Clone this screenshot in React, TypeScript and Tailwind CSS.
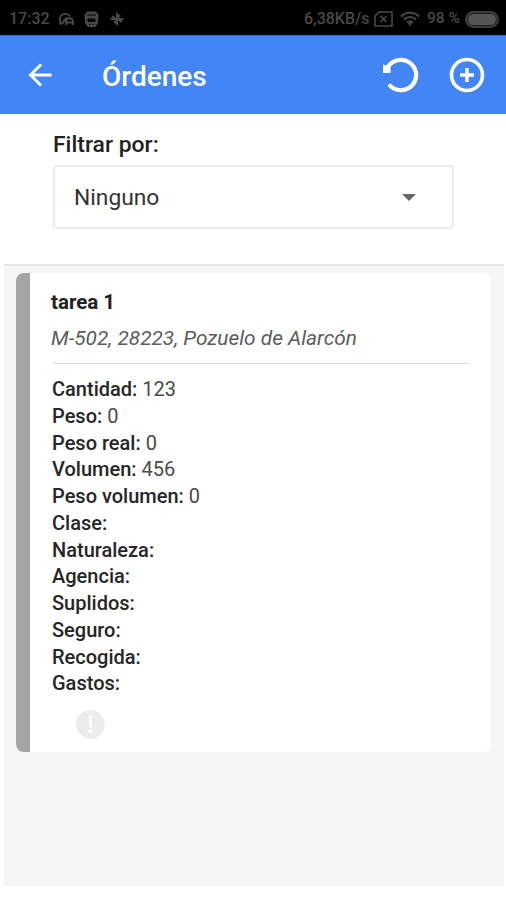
type Field = {
  label: string;
  value: string;
};

const fields: Field[] = [
  { label: "Cantidad", value: "123" },
  { label: "Peso", value: "0" },
  { label: "Peso real", value: "0" },
  { label: "Volumen", value: "456" },
  { label: "Peso volumen", value: "0" },
  { label: "Clase", value: "" },
  { label: "Naturaleza", value: "" },
  { label: "Agencia", value: "" },
  { label: "Suplidos", value: "" },
  { label: "Seguro", value: "" },
  { label: "Recogida", value: "" },
  { label: "Gastos", value: "" },
];

function StatusBar() {
  return (
    <div className="flex h-[35px] items-center bg-black pt-[3px] text-[16px] font-medium text-[#484848]">
      <span className="ml-[9px] w-[48px] whitespace-nowrap">17:32</span>
      <svg className="h-[16px] w-[18px]" viewBox="0 0 18 16" fill="none" stroke="#484848" strokeWidth="1.8">
        <path d="M6 12.500H3L3.500 10.500A5 4.800 0 1 1 13 5.500" />
        <path d="M6 12.500 7 9.500 10 6.500" />
        <path d="M9 14v-4l1.500-2.500h4L16 10v4M9 11.500h8" />
      </svg>
      <svg className="ml-[9px] h-[17px] w-[15px]" viewBox="0 0 15 17">
        <path d="M3 .5h9l2.500 3.500-.5 8-3 4H4l-3-4L.5 4z" fill="#484848" />
        <path d="M3 4h9M4 8h7v2.500H4z" fill="#000" stroke="#000" />
        <path d="M5 13.500h1.500M8.500 13.500H10" stroke="#000" />
      </svg>
      <svg className="ml-[10px] h-[16px] w-[16px]" viewBox="0 0 16 16" fill="#484848">
        <path d="M7 7V1l5 4-3 2h6l-3 5-3-3v6l-5-4 3-2H1l3-5z" />
      </svg>
      <span className="ml-auto w-[66px] whitespace-nowrap">6,38KB/s</span>
      <svg className="ml-[4px] h-[16px] w-[19px]" viewBox="0 0 19 16" fill="none" stroke="#484848" strokeWidth="1.6">
        <path d="M5 1h13v14H1V5zM6.500 5l6 6M12.500 5l-6 6" />
      </svg>
      <svg className="ml-[7px] h-[16px] w-[20px]" viewBox="0 0 20 16" fill="none" stroke="#484848" strokeWidth="2">
        <path d="M1 5.500c5-5 13-5 18 0M4 8.500c3.500-3.300 8.500-3.300 12 0M7 11.500c2-1.700 4-1.700 6 0" />
        <path d="m7.500 11.500 2.500 4 2.500-4z" fill="#484848" stroke="none" />
      </svg>
      <span className="ml-[7px] w-[33px] whitespace-nowrap text-[15.500px]">98 %</span>
      <span className="ml-[5px] mr-[7px] h-[17px] w-[34px] rounded-full border-2 border-[#3c3c3c] bg-[#565656] shadow-[inset_0_0_0_1px_#1a1a1a]" />
    </div>
  );
}

function Header() {
  return (
    <header className="flex h-[79px] items-center border-t border-[#3267be] bg-[#4285f4] text-white">
      <button className="ml-[28px]">
        <svg className="h-[24px] w-[24px]" viewBox="0 0 24 24" fill="none" stroke="#fff" strokeWidth="2.9">
          <path d="M23.500 12H3M13 1.500 2.500 12 13 22.500" />
        </svg>
      </button>
      <h1 className="mt-[4px] ml-[50px] text-[28px] leading-none font-medium">Órdenes</h1>
      <button className="ml-auto">
        <svg className="h-[38px] w-[38px]" viewBox="0 0 38 38">
          <path
            d="M6 13A15.200 15.200 0 1 1 9.200 29.800"
            fill="none"
            stroke="#fff"
            strokeWidth="4.200"
            strokeLinecap="round"
          />
          <path d="M2 8.500 9.500 11V17H2z" fill="#fff" />
        </svg>
      </button>
      <button className="ml-[30px] mr-[21px]">
        <svg className="h-[36px] w-[36px]" viewBox="0 0 36 36" fill="none" stroke="#fff">
          <circle cx="18" cy="18" r="15.500" strokeWidth="3.600" />
          <path d="M18 11v14M11 18h14" strokeWidth="3.400" />
        </svg>
      </button>
    </header>
  );
}

function Filter() {
  return (
    <section className="h-[150px] pt-[18px] pl-[53px]">
      <p className="text-[22.900px] leading-[26px] font-medium text-[#222]">Filtrar por:</p>
      <div className="mt-[7px] flex h-[64px] w-[401px] items-center justify-between rounded-[4px] border-2 border-[#ececec] pr-[36px] pl-[19px]">
        <span className="mt-[2px] text-[22.800px] leading-none text-[#333]">Ninguno</span>
        <svg className="h-[7px] w-[14px]" viewBox="0 0 14 7" fill="#666">
          <path d="M0 0h14L7 7z" />
        </svg>
      </div>
    </section>
  );
}

function OrderCard() {
  return (
    <article className="h-[479px] rounded-[8px] border-l-[14px] border-[#a5a5a5] bg-white pr-[22px] pl-[21px]">
      <h2 className="pt-[16px] text-[20.500px] leading-[26px] font-bold text-[#222]">tarea 1</h2>
      <p className="mt-[10px] text-[20.850px] leading-[26px] whitespace-nowrap text-[#5c5c5c] italic">
        M-502, 28223, Pozuelo de Alarcón
      </p>
      <hr className="mt-[12px] mb-[12px] ml-[2px] border-t border-[#d8d8d8]" />
      <ul className="ml-[1px]">
        {fields.map((f) => (
          <li key={f.label} className="h-[26.750px] text-[20px] leading-[26.750px] text-[#4a4a4a]">
            <span className="font-medium text-[#262626]">{f.label}:</span> {f.value}
          </li>
        ))}
      </ul>
      <svg className="mt-[13px] ml-[25px] h-[29px] w-[29px]" viewBox="0 0 29 29">
        <circle cx="14.500" cy="14.500" r="14.300" fill="#ececec" />
        <path d="M12.800 5.500h3.400l-.6 12h-2.200z" fill="#fff" />
        <circle cx="14.500" cy="21.500" r="1.900" fill="#fff" />
      </svg>
    </article>
  );
}

export default function App() {
  return (
    <div className="h-[900px] w-[506px] overflow-hidden bg-white font-['Roboto',sans-serif]">
      <StatusBar />
      <Header />
      <Filter />
      <main className="mr-[2px] ml-[4px] h-[622px] border-t-2 border-[#e5e5e5] bg-[#f6f6f6] pt-[7px] pr-[13px] pl-[12px]">
        <OrderCard />
      </main>
    </div>
  );
}
